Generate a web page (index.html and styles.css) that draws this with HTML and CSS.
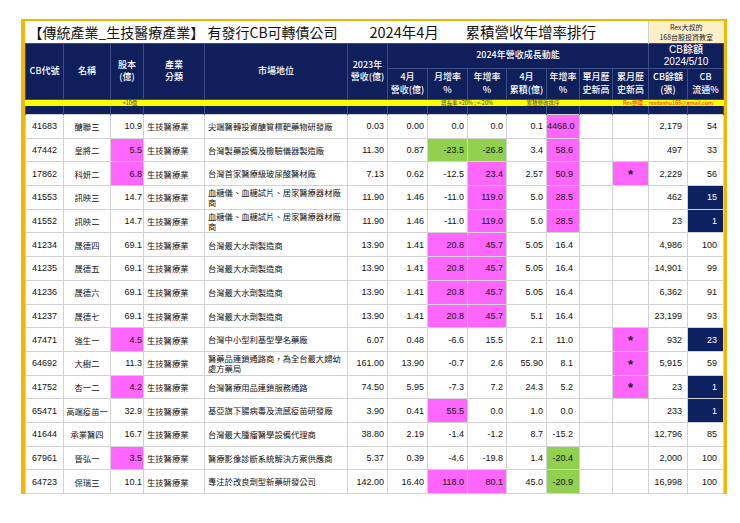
FILE: index.html
```html
<!DOCTYPE html>
<html lang="zh-Hant">
<head>
<meta charset="utf-8">
<link rel="stylesheet" href="styles.css">
</head>
<body>
<div class="frame">
<table class="grid">
<colgroup>
<col style="width:38px"><col style="width:47px"><col style="width:33px"><col style="width:61px"><col style="width:143px">
<col style="width:40px"><col style="width:40px"><col style="width:40px"><col style="width:39px"><col style="width:40px">
<col style="width:33px"><col style="width:33px"><col style="width:36px"><col style="width:39px"><col style="width:36px">
</colgroup>
<tr class="title-row">
<td colspan="13" class="title"><div class="title-in"><span class="t1">【傳統產業_生技醫療產業】 有發行CB可轉債公司</span><span class="t2">2024年4月</span><span class="t3">累積營收年增率排行</span></div></td>
<td colspan="2" class="brand">Rex大叔的<br>168台股投資教室</td>
</tr>
<tr class="hd hd-a">
<th rowspan="2">CB代號</th>
<th rowspan="2">名稱</th>
<th rowspan="2">股本<br>(億)</th>
<th rowspan="2">產業<br>分類</th>
<th rowspan="2">市場地位</th>
<th rowspan="2">2023年<br>營收(億)</th>
<th colspan="7">2024年營收成長動能</th>
<th colspan="2" class="cbh">CB餘額<br>2024/5/10</th>
</tr>
<tr class="hd hd-b">
<th>4月<br>營收(億)</th>
<th>月增率<br>%</th>
<th>年增率<br>%</th>
<th>4月<br>累積(億)</th>
<th>年增率<br>%</th>
<th>單月歷<br>史新高</th>
<th>累月歷<br>史新高</th>
<th>CB餘額<br>(張)</th>
<th>CB<br>流通%</th>
</tr>
<tr class="stripe">
<td colspan="2"></td><td class="s10">&lt;10億</td><td colspan="4"></td><td colspan="2">增長率 &gt;20% ; &lt;-20%</td><td colspan="2">累積營收排序</td><td></td><td colspan="3" class="rex">Rex整理：rexdashu168@gmail.com</td>
</tr>
<tr class="navy-row">
<td></td><td></td><td></td><td></td><td></td><td></td><td></td><td></td><td></td><td></td><td></td><td></td><td></td><td></td><td></td>
</tr>
<tr class="row"><td class="c">41683</td><td class="c n">醣聯三</td><td class="r1">10.9</td><td class="cat">生技醫療業</td><td class="pos">尖端醫轉投資醣質標靶藥物研發廠</td><td class="r">0.03</td><td class="r">0.00</td><td class="r">0.0</td><td class="r">0.0</td><td class="r">0.1</td><td class="r6 m">4468.0</td><td></td><td></td><td class="r5">2,179</td><td class="r6">54</td></tr>
<tr class="row"><td class="c">47442</td><td class="c n">皇將二</td><td class="r1 m">5.5</td><td class="cat">生技醫療業</td><td class="pos">台灣製藥設備及檢驗儀器製造廠</td><td class="r">11.30</td><td class="r">0.87</td><td class="r g">-23.5</td><td class="r g">-26.8</td><td class="r">3.4</td><td class="r6 m">58.6</td><td></td><td></td><td class="r5">497</td><td class="r6">33</td></tr>
<tr class="row"><td class="c">17862</td><td class="c n">科妍二</td><td class="r1 m">6.8</td><td class="cat">生技醫療業</td><td class="pos">台灣首家醫療級玻尿酸醫材廠</td><td class="r">7.13</td><td class="r">0.62</td><td class="r">-12.5</td><td class="r m">23.4</td><td class="r">2.57</td><td class="r6 m">50.9</td><td></td><td class="star m">*</td><td class="r5">2,229</td><td class="r6">56</td></tr>
<tr class="row"><td class="c">41553</td><td class="c n">訊映三</td><td class="r1">14.7</td><td class="cat">生技醫療業</td><td class="pos">血糖儀、血糖試片、居家醫療器材廠商</td><td class="r">11.90</td><td class="r">1.46</td><td class="r">-11.0</td><td class="r m">119.0</td><td class="r">5.0</td><td class="r6 m">28.5</td><td></td><td></td><td class="r5">462</td><td class="r6 nv">15</td></tr>
<tr class="row"><td class="c">41552</td><td class="c n">訊映二</td><td class="r1">14.7</td><td class="cat">生技醫療業</td><td class="pos">血糖儀、血糖試片、居家醫療器材廠商</td><td class="r">11.90</td><td class="r">1.46</td><td class="r">-11.0</td><td class="r m">119.0</td><td class="r">5.0</td><td class="r6 m">28.5</td><td></td><td></td><td class="r5">23</td><td class="r6 nv">1</td></tr>
<tr class="row"><td class="c">41234</td><td class="c n">晟德四</td><td class="r1">69.1</td><td class="cat">生技醫療業</td><td class="pos">台灣最大水劑製造商</td><td class="r">13.90</td><td class="r">1.41</td><td class="r m">20.8</td><td class="r m">45.7</td><td class="r">5.05</td><td class="r6">16.4</td><td></td><td></td><td class="r5">4,986</td><td class="r6">100</td></tr>
<tr class="row"><td class="c">41235</td><td class="c n">晟德五</td><td class="r1">69.1</td><td class="cat">生技醫療業</td><td class="pos">台灣最大水劑製造商</td><td class="r">13.90</td><td class="r">1.41</td><td class="r m">20.8</td><td class="r m">45.7</td><td class="r">5.05</td><td class="r6">16.4</td><td></td><td></td><td class="r5">14,901</td><td class="r6">99</td></tr>
<tr class="row"><td class="c">41236</td><td class="c n">晟德六</td><td class="r1">69.1</td><td class="cat">生技醫療業</td><td class="pos">台灣最大水劑製造商</td><td class="r">13.90</td><td class="r">1.41</td><td class="r m">20.8</td><td class="r m">45.7</td><td class="r">5.05</td><td class="r6">16.4</td><td></td><td></td><td class="r5">6,362</td><td class="r6">91</td></tr>
<tr class="row"><td class="c">41237</td><td class="c n">晟德七</td><td class="r1">69.1</td><td class="cat">生技醫療業</td><td class="pos">台灣最大水劑製造商</td><td class="r">13.90</td><td class="r">1.41</td><td class="r m">20.8</td><td class="r m">45.7</td><td class="r">5.1</td><td class="r6">16.4</td><td></td><td></td><td class="r5">23,199</td><td class="r6">93</td></tr>
<tr class="row"><td class="c">47471</td><td class="c n">強生一</td><td class="r1 m">4.5</td><td class="cat">生技醫療業</td><td class="pos">台灣中小型利基型學名藥廠</td><td class="r">6.07</td><td class="r">0.48</td><td class="r">-6.6</td><td class="r">15.5</td><td class="r">2.1</td><td class="r6">11.0</td><td></td><td class="star m">*</td><td class="r5">932</td><td class="r6 nv">23</td></tr>
<tr class="row"><td class="c">64692</td><td class="c n">大樹二</td><td class="r1">11.3</td><td class="cat">生技醫療業</td><td class="pos">醫藥品連鎖通路商，為全台最大婦幼處方藥局</td><td class="r">161.00</td><td class="r">13.90</td><td class="r">-0.7</td><td class="r">2.6</td><td class="r">55.90</td><td class="r6">8.1</td><td></td><td class="star m">*</td><td class="r5">5,915</td><td class="r6">59</td></tr>
<tr class="row"><td class="c">41752</td><td class="c n">杏一二</td><td class="r1 m">4.2</td><td class="cat">生技醫療業</td><td class="pos">台灣醫療用品連鎖服務通路</td><td class="r">74.50</td><td class="r">5.95</td><td class="r">-7.3</td><td class="r">7.2</td><td class="r">24.3</td><td class="r6">5.2</td><td></td><td class="star m">*</td><td class="r5">23</td><td class="r6 nv">1</td></tr>
<tr class="row"><td class="c">65471</td><td class="c n">高端疫苗一</td><td class="r1">32.9</td><td class="cat">生技醫療業</td><td class="pos">基亞旗下腸病毒及流感疫苗研發廠</td><td class="r">3.90</td><td class="r">0.41</td><td class="r m">55.5</td><td class="r">0.0</td><td class="r">1.0</td><td class="r6">0.0</td><td></td><td></td><td class="r5">233</td><td class="r6 nv">1</td></tr>
<tr class="row"><td class="c">41644</td><td class="c n">承業醫四</td><td class="r1">16.7</td><td class="cat">生技醫療業</td><td class="pos">台灣最大腫瘤醫學設備代理商</td><td class="r">38.80</td><td class="r">2.19</td><td class="r">-1.4</td><td class="r">-1.2</td><td class="r">8.7</td><td class="r6">-15.2</td><td></td><td></td><td class="r5">12,796</td><td class="r6">85</td></tr>
<tr class="row"><td class="c">67961</td><td class="c n">晉弘一</td><td class="r1 m">3.5</td><td class="cat">生技醫療業</td><td class="pos">醫療影像診斷系統解決方案供應商</td><td class="r">5.37</td><td class="r">0.39</td><td class="r">-4.6</td><td class="r">-19.8</td><td class="r">1.4</td><td class="r6 g">-20.4</td><td></td><td></td><td class="r5">2,000</td><td class="r6">100</td></tr>
<tr class="row"><td class="c">64723</td><td class="c n">保瑞三</td><td class="r1">10.1</td><td class="cat">生技醫療業</td><td class="pos">專注於改良劑型新藥研發公司</td><td class="r">142.00</td><td class="r">16.40</td><td class="r m">118.0</td><td class="r m">80.1</td><td class="r">45.0</td><td class="r6 g">-20.9</td><td></td><td></td><td class="r5">16,998</td><td class="r6">100</td></tr>
</table>
</div>
</body>
</html>
```

FILE: styles.css
```css
html, body {
  margin: 0;
  padding: 0;
  background: #ffffff;
}
body {
  font-family: "Liberation Sans", "Noto Sans CJK TC", sans-serif;
  color: #111;
}
.frame {
  margin: 19px 0 0 21px;
  width: 698px;
  border-top: 2px solid #f2b705;
  border-left: 4px solid #f2b705;
  border-right: 4px solid #f2b705;
}
.grid {
  border-collapse: collapse;
  table-layout: fixed;
  width: 698px;
}
.grid td, .grid th {
  padding: 0;
  overflow: hidden;
  white-space: nowrap;
  font-size: 9px;
}
.grid .title-row {
  height: 22px;
}
.grid .title {
  background: #fff;
  border-right: 1px solid #d0d0d0;
}
.title-in {
  display: flex;
  align-items: center;
  font-family: "Noto Sans CJK TC", sans-serif;
  font-size: 14.5px;
  color: #111;
  line-height: 20px;
}
.t1 {
  width: 341px;
  padding-left: 3px;
  font-size: 14px;
}
.t2 {
  width: 96px;
}
.t3 {
  flex: 1;
}
.grid .brand {
  background: #fdefc7;
  font-family: "Noto Sans CJK TC", sans-serif;
  font-size: 7px;
  line-height: 10px;
  text-align: center;
  color: #222;
}
.grid .hd th {
  background: #0f1f5c;
  color: #fff;
  font-family: "Noto Sans CJK TC", sans-serif;
  font-weight: 500;
  font-size: 9px;
  line-height: 12.5px;
  border: 1px solid #3d4d85;
  text-align: center;
}
.grid .hd-a {
  height: 23px;
}
.grid .hd-b {
  height: 31px;
}
.grid .hd .cbh {
  font-family: "Liberation Sans", "Noto Sans CJK TC", sans-serif;
  font-size: 10px;
  line-height: 12px;
}
.grid .stripe {
  height: 6px;
}
.grid .stripe td {
  background: #ffff00;
  height: 6px;
  font-family: "Noto Sans CJK TC", sans-serif;
  font-size: 5.5px;
  line-height: 6px;
  text-align: center;
  color: #3a3a20;
  border-top: 1px solid #0f1f5c;
}
.grid .stripe .s10 {
  padding-left: 6px;
}
.grid .stripe .rex {
  color: #e8200c;
}
.grid .navy-row {
  height: 9px;
}
.grid .navy-row td {
  background: #0f1f5c;
  border-left: 1px solid #3d4d85;
  border-right: 1px solid #3d4d85;
}
.grid .row {
  height: 23.7px;
}
.grid .row td {
  border: 1px solid #d2d2d2;
}
.grid .c {
  text-align: center;
}
.grid .n, .grid .cat, .grid .pos {
  font-family: "Noto Sans CJK TC", sans-serif;
  font-size: 8.3px;
}
.grid .cat {
  padding-left: 3px;
}
.grid .pos {
  padding-left: 3px;
  white-space: normal;
  line-height: 10.5px;
}
.grid .r1 {
  text-align: right;
  padding-right: 1px;
}
.grid .r {
  text-align: right;
  padding-right: 3px;
}
.grid .r5 {
  text-align: right;
  padding-right: 5px;
}
.grid .r6 {
  text-align: right;
  padding-right: 6px;
}
.grid .star {
  text-align: center;
  font-size: 13px;
  font-weight: bold;
  line-height: 10px;
  padding-top: 3px;
}
.grid .m {
  background: #ff66ff;
}
.grid .g {
  background: #92d050;
}
.grid .nv {
  background: #0d2160;
  color: #fff;
}
```
